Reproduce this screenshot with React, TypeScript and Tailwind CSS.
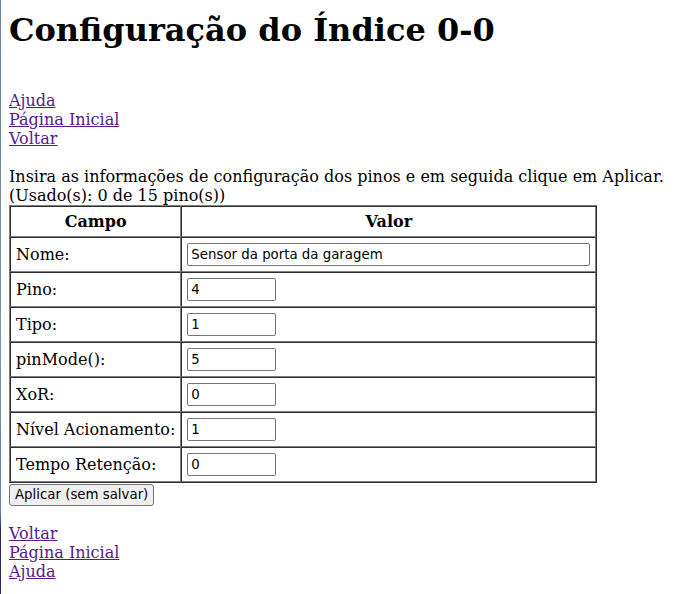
import React from "react";

// Pin configuration form (index 0-0), plain browser-default look.
const fields: { label: string; value: string; wide?: boolean }[] = [
  { label: "Nome:", value: "Sensor da porta da garagem", wide: true },
  { label: "Pino:", value: "4" },
  { label: "Tipo:", value: "1" },
  { label: "pinMode():", value: "5" },
  { label: "XoR:", value: "0" },
  { label: "Nível Acionamento:", value: "1" },
  { label: "Tempo Retenção:", value: "0" },
];

const NavLink: React.FC<{ children: React.ReactNode }> = ({ children }) => (
  <a href="#" className="block w-fit text-[#551a8b] underline leading-[19px]">
    {children}
  </a>
);

const cell =
  "border border-[gray] [border-style:inset] p-[5px] align-middle leading-[normal]";

export default function App() {
  return (
    <div className="flex min-h-[594px] bg-white text-black font-['DejaVu_Serif',serif] text-[16px]">
      <div className="w-px shrink-0 bg-[linear-gradient(to_bottom,#6e889c_0%,#7a93a6_60%,#6a879c_86%,#2c2b5f_89%,#2c2b5f_100%)]" />
      <div className="ml-2">
        <h1 className="mt-[12px] text-[32px] font-bold leading-[37px]">
          Configuração do Índice 0-0
        </h1>

        <div className="mt-[42px]">
          <NavLink>Ajuda</NavLink>
          <NavLink>Página Inicial</NavLink>
          <NavLink>Voltar</NavLink>
        </div>

        <p className="mt-[19px] leading-[19px]">
          Insira as informações de configuração dos pinos e em seguida clique em Aplicar.
          <br />
          (Usado(s): 0 de 15 pino(s))
        </p>

        <table className="border border-[gray] [border-style:outset] border-separate border-spacing-0">
          <thead>
            <tr>
              <th className={`${cell} text-center font-bold`}>Campo</th>
              <th className={`${cell} text-center font-bold`}>Valor</th>
            </tr>
          </thead>
          <tbody>
            {fields.map((f) => (
              <tr key={f.label}>
                <td className={`${cell} text-left whitespace-nowrap`}>{f.label}</td>
                <td className={`${cell} text-left`}>
                  <input
                    readOnly
                    value={f.value}
                    className={`block h-[23px] ${
                      f.wide ? "w-[403px]" : "w-[89px]"
                    } rounded-[2px] border border-[#767676] bg-white px-[3px] font-['DejaVu_Sans',sans-serif] text-[13.33px] text-black`}
                  />
                </td>
              </tr>
            ))}
          </tbody>
        </table>

        <button className="mt-px block h-[22px] rounded-[3px] border border-[#767676] bg-[#efefef] px-[5px] font-['DejaVu_Sans',sans-serif] text-[13.33px] text-black">
          Aplicar (sem salvar)
        </button>

        <div className="mt-[18px]">
          <NavLink>Voltar</NavLink>
          <NavLink>Página Inicial</NavLink>
          <NavLink>Ajuda</NavLink>
        </div>
      </div>
    </div>
  );
}
